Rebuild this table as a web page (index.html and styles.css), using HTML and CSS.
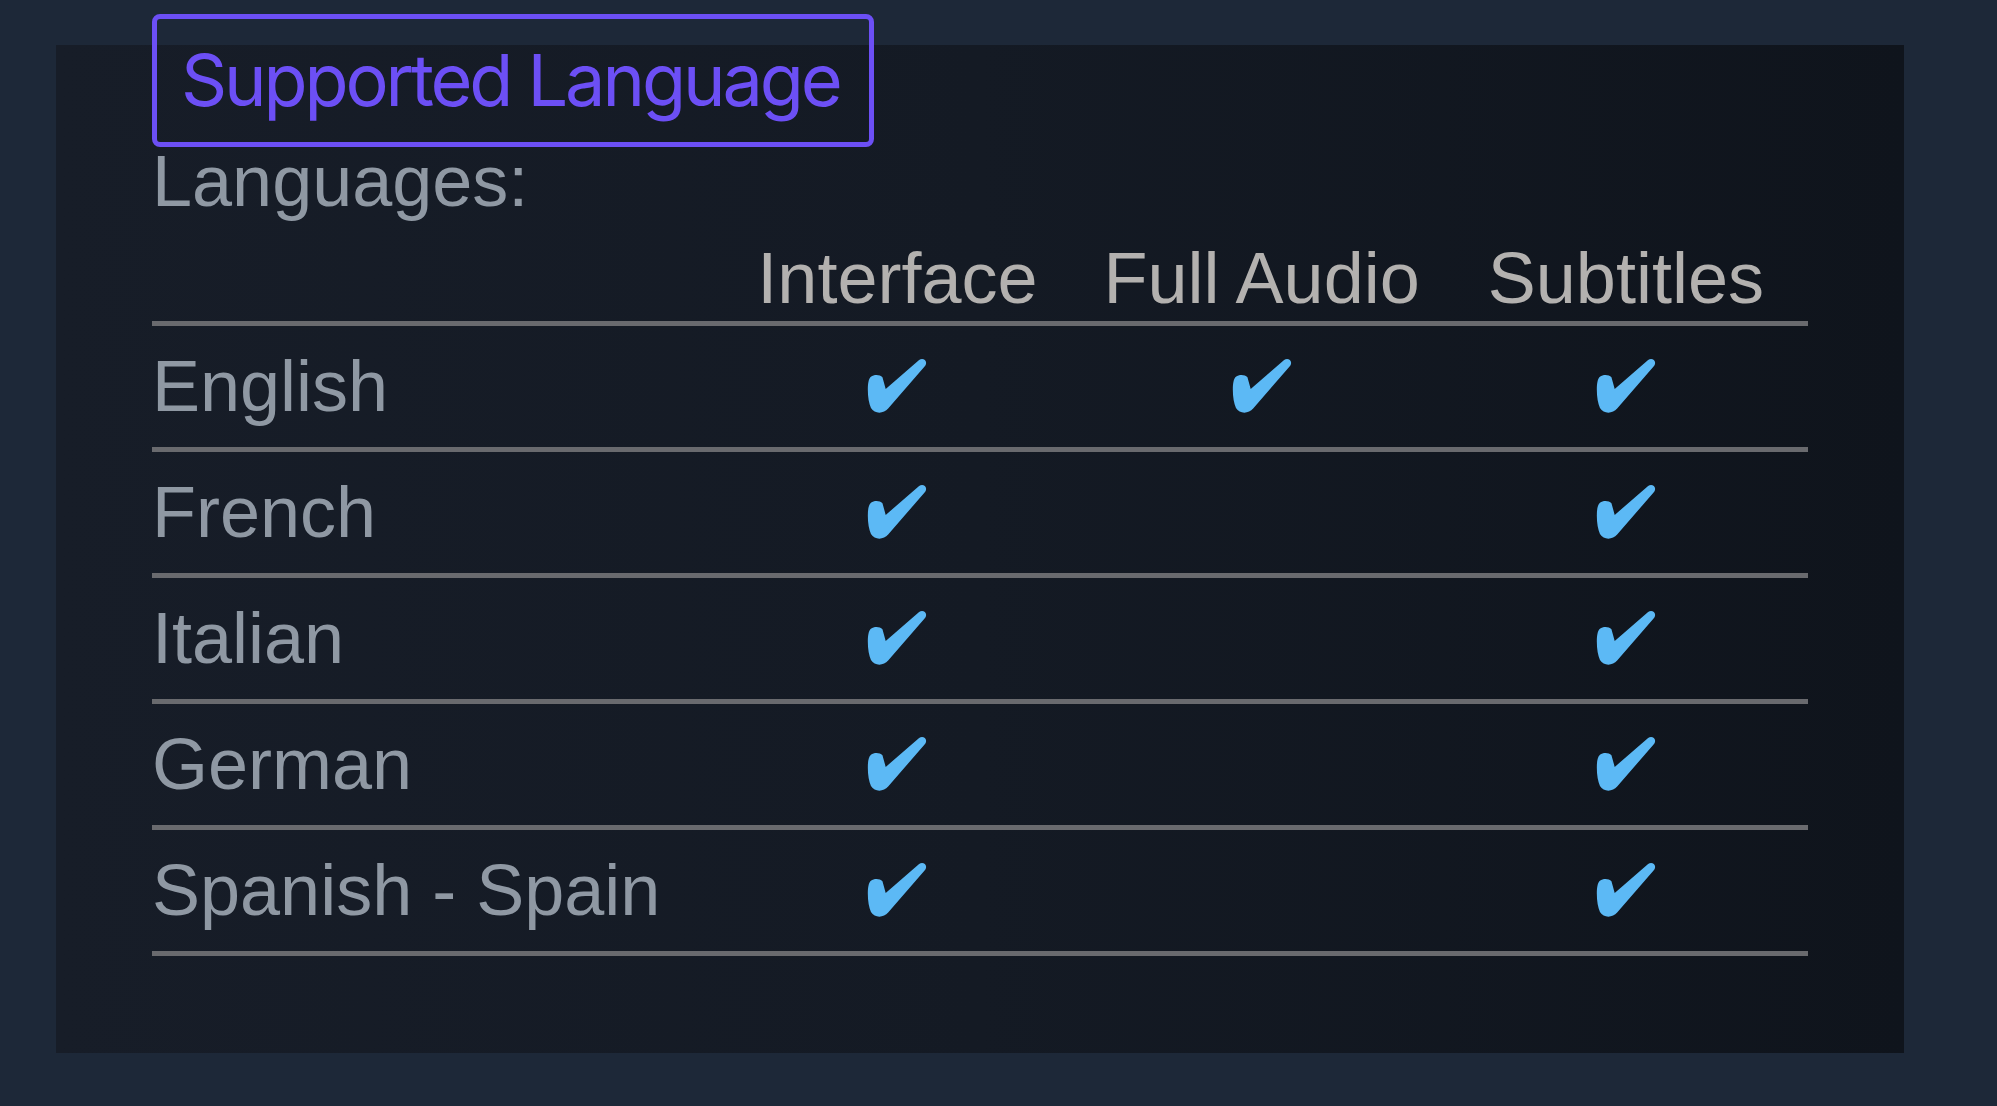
FILE: index.html
```html
<!DOCTYPE html>
<html lang="en">
<head>
<meta charset="utf-8">
<title>Supported Language</title>
<link rel="stylesheet" href="styles.css">
</head>
<body>
<main class="panel">
  <h2 class="title">Supported Language</h2>
  <div class="label">Languages:</div>
  <table class="langs">
    <colgroup>
      <col class="col-name">
      <col class="col-opt">
      <col class="col-opt">
      <col class="col-opt">
    </colgroup>
    <thead>
      <tr>
        <th></th>
        <th>Interface</th>
        <th>Full Audio</th>
        <th>Subtitles</th>
      </tr>
    </thead>
    <tbody>
      <tr>
        <td class="name">English</td>
        <td><svg class="check" viewBox="0 0 61 57"><path d="M4 19C7 16.5 13 16.5 15.7 19.5L19 31.5L53 2C56 -0.5 61 1.5 60 6C59.8 7 59.4 7.6 58.8 8.3L21.5 51.5C17 56.8 8 57.5 4 51C2 46 0.8 40 0.8 32C0.8 26 1.5 21 4 19Z"/></svg></td>
        <td><svg class="check" viewBox="0 0 61 57"><path d="M4 19C7 16.5 13 16.5 15.7 19.5L19 31.5L53 2C56 -0.5 61 1.5 60 6C59.8 7 59.4 7.6 58.8 8.3L21.5 51.5C17 56.8 8 57.5 4 51C2 46 0.8 40 0.8 32C0.8 26 1.5 21 4 19Z"/></svg></td>
        <td><svg class="check" viewBox="0 0 61 57"><path d="M4 19C7 16.5 13 16.5 15.7 19.5L19 31.5L53 2C56 -0.5 61 1.5 60 6C59.8 7 59.4 7.6 58.8 8.3L21.5 51.5C17 56.8 8 57.5 4 51C2 46 0.8 40 0.8 32C0.8 26 1.5 21 4 19Z"/></svg></td>
      </tr>
      <tr>
        <td class="name">French</td>
        <td><svg class="check" viewBox="0 0 61 57"><path d="M4 19C7 16.5 13 16.5 15.7 19.5L19 31.5L53 2C56 -0.5 61 1.5 60 6C59.8 7 59.4 7.6 58.8 8.3L21.5 51.5C17 56.8 8 57.5 4 51C2 46 0.8 40 0.8 32C0.8 26 1.5 21 4 19Z"/></svg></td>
        <td></td>
        <td><svg class="check" viewBox="0 0 61 57"><path d="M4 19C7 16.5 13 16.5 15.7 19.5L19 31.5L53 2C56 -0.5 61 1.5 60 6C59.8 7 59.4 7.6 58.8 8.3L21.5 51.5C17 56.8 8 57.5 4 51C2 46 0.8 40 0.8 32C0.8 26 1.5 21 4 19Z"/></svg></td>
      </tr>
      <tr>
        <td class="name">Italian</td>
        <td><svg class="check" viewBox="0 0 61 57"><path d="M4 19C7 16.5 13 16.5 15.7 19.5L19 31.5L53 2C56 -0.5 61 1.5 60 6C59.8 7 59.4 7.6 58.8 8.3L21.5 51.5C17 56.8 8 57.5 4 51C2 46 0.8 40 0.8 32C0.8 26 1.5 21 4 19Z"/></svg></td>
        <td></td>
        <td><svg class="check" viewBox="0 0 61 57"><path d="M4 19C7 16.5 13 16.5 15.7 19.5L19 31.5L53 2C56 -0.5 61 1.5 60 6C59.8 7 59.4 7.6 58.8 8.3L21.5 51.5C17 56.8 8 57.5 4 51C2 46 0.8 40 0.8 32C0.8 26 1.5 21 4 19Z"/></svg></td>
      </tr>
      <tr>
        <td class="name">German</td>
        <td><svg class="check" viewBox="0 0 61 57"><path d="M4 19C7 16.5 13 16.5 15.7 19.5L19 31.5L53 2C56 -0.5 61 1.5 60 6C59.8 7 59.4 7.6 58.8 8.3L21.5 51.5C17 56.8 8 57.5 4 51C2 46 0.8 40 0.8 32C0.8 26 1.5 21 4 19Z"/></svg></td>
        <td></td>
        <td><svg class="check" viewBox="0 0 61 57"><path d="M4 19C7 16.5 13 16.5 15.7 19.5L19 31.5L53 2C56 -0.5 61 1.5 60 6C59.8 7 59.4 7.6 58.8 8.3L21.5 51.5C17 56.8 8 57.5 4 51C2 46 0.8 40 0.8 32C0.8 26 1.5 21 4 19Z"/></svg></td>
      </tr>
      <tr>
        <td class="name">Spanish - Spain</td>
        <td><svg class="check" viewBox="0 0 61 57"><path d="M4 19C7 16.5 13 16.5 15.7 19.5L19 31.5L53 2C56 -0.5 61 1.5 60 6C59.8 7 59.4 7.6 58.8 8.3L21.5 51.5C17 56.8 8 57.5 4 51C2 46 0.8 40 0.8 32C0.8 26 1.5 21 4 19Z"/></svg></td>
        <td></td>
        <td><svg class="check" viewBox="0 0 61 57"><path d="M4 19C7 16.5 13 16.5 15.7 19.5L19 31.5L53 2C56 -0.5 61 1.5 60 6C59.8 7 59.4 7.6 58.8 8.3L21.5 51.5C17 56.8 8 57.5 4 51C2 46 0.8 40 0.8 32C0.8 26 1.5 21 4 19Z"/></svg></td>
      </tr>
    </tbody>
  </table>
</main>
</body>
</html>
```

FILE: styles.css
```css
html, body {
  margin: 0;
  padding: 0;
}

body {
  background: #1d2838;
  width: 1997px;
  height: 1106px;
  overflow: hidden;
  font-family: "Liberation Sans", Arial, Helvetica, sans-serif;
}

.panel {
  box-sizing: border-box;
  margin: 45px 0 0 56px;
  width: 1848px;
  height: 1008px;
  padding: 0 96px;
  background: linear-gradient(90deg, #171d28 0%, #141a24 50%, #0f141c 100%);
  display: flex;
  flex-direction: column;
  align-items: flex-start;
}

.title {
  margin: -31px 0 0 0;
  box-sizing: border-box;
  height: 133px;
  padding: 25px 29px 0 24px;
  border: 5px solid #6c4ff5;
  border-radius: 8px;
  font-family: Inter, "Liberation Sans", sans-serif;
  font-weight: 400;
  font-size: 72px;
  line-height: 72px;
  letter-spacing: -3.1px;
  color: #6c4ff5;
  white-space: nowrap;
}

.label {
  font-size: 72px;
  line-height: 72px;
  color: #8f98a3;
  margin: -2px 0 0 0;
}

.langs {
  margin-top: 25px;
  width: 1656px;
  border-collapse: collapse;
  table-layout: fixed;
  font-size: 72px;
  line-height: 72px;
}

.col-name {
  width: 563px;
}

.col-opt {
  width: 364px;
}

.langs th {
  font-weight: 400;
  color: #b3b1af;
  text-align: center;
  padding: 0 0 7px 0;
  border-bottom: 5px solid #696a6e;
  white-space: nowrap;
}

.langs td {
  padding: 24px 0 25px 0;
  border-bottom: 5px solid #696a6e;
  text-align: center;
  vertical-align: middle;
}

.langs td.name {
  text-align: left;
  color: #8f98a3;
  white-space: nowrap;
}

.check {
  display: block;
  margin: 0 auto;
  width: 60px;
  height: 56px;
  fill: #5cb9f5;
}
```
